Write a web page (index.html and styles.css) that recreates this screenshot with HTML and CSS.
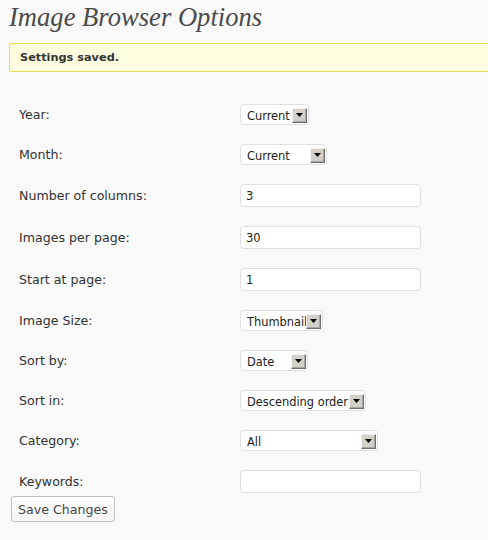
FILE: index.html
```html
<!DOCTYPE html>
<html>
<head>
<meta charset="utf-8">
<link rel="stylesheet" href="styles.css">
</head>
<body>
<div class="wrap">
  <h2 class="title">Image Browser Options</h2>
  <div class="notice"><p><strong>Settings saved.</strong></p></div>
  <form class="options">
    <div class="grid">
      <label class="lbl">Year:</label>
      <div class="ctl"><span class="sel w-year"><select><option>Current</option></select><span class="arr"><svg width="7" height="4" viewBox="0 0 7 4"><polygon points="0,0 7,0 3.5,4" fill="#000"/></svg></span></span></div>

      <label class="lbl">Month:</label>
      <div class="ctl"><span class="sel w-month"><select><option>Current</option></select><span class="arr"><svg width="7" height="4" viewBox="0 0 7 4"><polygon points="0,0 7,0 3.5,4" fill="#000"/></svg></span></span></div>

      <label class="lbl">Number of columns:</label>
      <div class="ctl"><input class="txt" type="text" value="3"></div>

      <label class="lbl">Images per page:</label>
      <div class="ctl"><input class="txt" type="text" value="30"></div>

      <label class="lbl">Start at page:</label>
      <div class="ctl"><input class="txt" type="text" value="1"></div>

      <label class="lbl">Image Size:</label>
      <div class="ctl"><span class="sel w-size"><select><option>Thumbnail</option></select><span class="arr"><svg width="7" height="4" viewBox="0 0 7 4"><polygon points="0,0 7,0 3.5,4" fill="#000"/></svg></span></span></div>

      <label class="lbl">Sort by:</label>
      <div class="ctl"><span class="sel w-sortby"><select><option>Date</option></select><span class="arr"><svg width="7" height="4" viewBox="0 0 7 4"><polygon points="0,0 7,0 3.5,4" fill="#000"/></svg></span></span></div>

      <label class="lbl">Sort in:</label>
      <div class="ctl"><span class="sel w-sortin"><select><option>Descending order</option></select><span class="arr"><svg width="7" height="4" viewBox="0 0 7 4"><polygon points="0,0 7,0 3.5,4" fill="#000"/></svg></span></span></div>

      <label class="lbl">Category:</label>
      <div class="ctl"><span class="sel w-cat"><select><option>All</option></select><span class="arr"><svg width="7" height="4" viewBox="0 0 7 4"><polygon points="0,0 7,0 3.5,4" fill="#000"/></svg></span></span></div>

      <label class="lbl">Keywords:</label>
      <div class="ctl"><input class="txt" type="text" value=""></div>
    </div>
    <button class="save" type="button">Save Changes</button>
  </form>
</div>
</body>
</html>
```

FILE: styles.css
```css
html, body {
  margin: 0;
  padding: 0;
  background: #f9f9f9;
}

body {
  font-family: "DejaVu Sans", Verdana, sans-serif;
  color: #333;
}

.wrap {
  margin-left: 9px;
}

.title {
  margin: 0;
  padding-top: 2px;
  font-family: "Liberation Serif", "Times New Roman", serif;
  font-style: italic;
  font-weight: normal;
  font-size: 26.6px;
  line-height: 30px;
  color: #4a4a4a;
}

.notice {
  margin: 11px 0 0 0;
  background: #ffffe0;
  border: 1px solid #e6db55;
  border-right-width: 0;
  border-radius: 3px 0 0 3px;
  padding: 0 10px;
}

.notice p {
  margin: 0;
  font-size: 11.3px;
  line-height: 27px;
  color: #333;
}

.grid {
  margin-top: 32px;
  padding-left: 10px;
  display: grid;
  grid-template-columns: 221px 1fr;
  row-gap: 19px;
  align-items: center;
}

.lbl {
  font-size: 12.6px;
  line-height: 20px;
  color: #333;
}

.ctl {
  display: flex;
  align-items: center;
}

.txt {
  box-sizing: border-box;
  width: 181px;
  height: 23px;
  margin: 0;
  padding: 1px 5px 0;
  border: 1px solid #dfdfdf;
  border-radius: 4px;
  background: #fff;
  font-family: "DejaVu Sans", Verdana, sans-serif;
  font-size: 11.5px;
  color: #222;
  outline: none;
}

.sel {
  position: relative;
  display: inline-block;
  height: 21px;
}

.sel select {
  appearance: none;
  -webkit-appearance: none;
  box-sizing: border-box;
  width: 100%;
  height: 21px;
  margin: 0;
  padding: 2px 0 0 6px;
  border: 1px solid #dfdfdf;
  border-radius: 4px;
  background: #fff;
  font-family: "DejaVu Sans", Verdana, sans-serif;
  font-size: 11.4px;
  color: #222;
  outline: none;
}

.arr {
  position: absolute;
  right: 2px;
  top: 4px;
  box-sizing: border-box;
  width: 15px;
  height: 15px;
  background: #d4d0c8;
  border-style: solid;
  border-width: 1px;
  border-color: #f4f4f4 #6e6e6e #6e6e6e #f4f4f4;
  box-shadow: inset -1px -1px 0 #a6a6a6;
  display: flex;
  align-items: center;
  justify-content: center;
}

.arr svg {
  display: block;
  margin: 0 1px 1px 0;
}

.w-year { width: 69px; }
.w-month { width: 87px; }
.w-size { width: 83px; }
.w-sortby { width: 68px; }
.w-sortin { width: 126px; }
.w-cat { width: 138px; }

.save {
  display: block;
  margin: 3px 0 0 2px;
  box-sizing: border-box;
  height: 26px;
  padding: 0 6px;
  border: 1px solid #c0c0c0;
  border-radius: 3px;
  background: linear-gradient(#ffffff, #f4f4f4);
  font-family: "DejaVu Sans", Verdana, sans-serif;
  font-size: 12.6px;
  color: #464646;
}
```
